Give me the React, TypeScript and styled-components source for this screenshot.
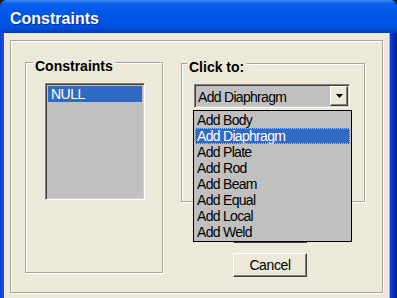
import React from 'react';
import styled, { createGlobalStyle } from 'styled-components';

const GlobalStyle = createGlobalStyle`
    html, body {
        margin: 0;
        padding: 0;
        background: #1c1c14;
    }
    body {
        font-family: 'Liberation Sans', Arial, sans-serif;
    }
`;

const options = [
    'Add Body',
    'Add Diaphragm',
    'Add Plate',
    'Add Rod',
    'Add Beam',
    'Add Equal',
    'Add Local',
    'Add Weld',
];

const App: React.FC = () => {
    const selected = 'Add Diaphragm';
    return (
        <>
            <GlobalStyle />
            <Window>
                <TitleBar>Constraints</TitleBar>
                <Frame>
                    <ClientArea>
                        <OuterPanel>
                            <ConstraintsGroup>
                                <Legend>Constraints</Legend>
                                <ListBox>
                                    <ListItem $active>NULL</ListItem>
                                </ListBox>
                            </ConstraintsGroup>
                            <RightColumn>
                                <ClickGroup>
                                    <Legend $left={5}>Click to:</Legend>
                                    <Combo>
                                        <ComboText>{selected}</ComboText>
                                        <ArrowButton>
                                            <svg width="7" height="4" viewBox="0 0 7 4">
                                                <path d="M0 0h7L3.5 4z" fill="#000" />
                                            </svg>
                                        </ArrowButton>
                                        <DropList>
                                            {options.map((o) => (
                                                <DropItem key={o} $active={o === selected}>
                                                    {o}
                                                </DropItem>
                                            ))}
                                        </DropList>
                                    </Combo>
                                </ClickGroup>
                                <PushButton $top={17}>OK</PushButton>
                                <PushButton $top={10}>Cancel</PushButton>
                            </RightColumn>
                        </OuterPanel>
                    </ClientArea>
                </Frame>
            </Window>
        </>
    );
};

export default App;

const Window = styled.div`
    width: 397px;
    height: 298px;
    display: flex;
    flex-direction: column;
    overflow: hidden;
    border-radius: 7px 7px 0 0;
    background: #0b45dc;
`;

const TitleBar = styled.div`
    height: 33px;
    box-sizing: border-box;
    padding: 10px 0 0 10px;
    background: linear-gradient(
        to bottom,
        #3d8ef8 0%,
        #0a5fec 10%,
        #0057e6 45%,
        #0053df 80%,
        #003cb6 100%
    );
    color: #fff;
    font-weight: 700;
    font-size: 16px;
    line-height: 18px;
    text-shadow: 1px 1px 0 #0b2a8c;
`;

const Frame = styled.div`
    flex: 1;
    display: flex;
    padding: 0 8px 0 4px;
    background: linear-gradient(
        to right,
        #0a3fd4 0,
        #1653e6 4px,
        #0b45dc 388px,
        #0a3cd0 391px,
        #001a8e 397px
    );
`;

const ClientArea = styled.div`
    flex: 1;
    background: #ece9d8;
    padding: 7px 6px 0 6px;
    box-shadow: 1px 0 0 #8fb4ea;
`;

const etched = `
    border: 1px solid #a7a595;
    box-shadow: inset 1px 1px 0 #fff, 1px 1px 0 #fff;
`;

const OuterPanel = styled.div`
    ${etched}
    height: 253px;
    box-sizing: border-box;
    display: flex;
    align-items: flex-start;
    gap: 18px;
    padding: 21px 0 0 14px;
`;

const GroupBox = styled.div`
    ${etched}
    position: relative;
    box-sizing: border-box;
`;

const ConstraintsGroup = styled(GroupBox)`
    width: 138px;
    height: 211px;
    padding: 20px 0 0 19px;
`;

const ClickGroup = styled(GroupBox)`
    width: 184px;
    height: 139px;
    padding: 20px 0 0 12px;
`;

const Legend = styled.span<{ $left?: number }>`
    position: absolute;
    top: -5px;
    left: ${({ $left }) => $left ?? 7}px;
    padding: 0 2px;
    background: #ece9d8;
    font-weight: 700;
    font-size: 14px;
    line-height: 16px;
    color: #000;
`;

const sunken = `
    border-style: solid;
    border-width: 1px;
    border-color: #808080 #fff #fff #808080;
    box-shadow: inset 1px 1px 0 #404040, inset -1px -1px 0 #d4d0c8;
`;

const ListBox = styled.div`
    ${sunken}
    width: 100px;
    height: 117px;
    box-sizing: border-box;
    padding: 2px;
    background: #c0c0c0;
`;

const ListItem = styled.div<{ $active?: boolean }>`
    height: 16px;
    line-height: 16px;
    padding-left: 3px;
    font-size: 14px;
    letter-spacing: -0.5px;
    color: ${({ $active }) => ($active ? '#fff' : '#000')};
    background: ${({ $active }) => ($active ? '#316ac5' : 'transparent')};
`;

const RightColumn = styled.div`
    display: flex;
    flex-direction: column;
    align-items: flex-start;
    margin-top: 1px;
`;

const Combo = styled.div`
    ${sunken}
    position: relative;
    width: 156px;
    height: 24px;
    box-sizing: border-box;
    padding: 1px 1px 1px 3px;
    display: flex;
    align-items: center;
    background: #c0c0c0;
`;

const ComboText = styled.span`
    flex: 1;
    padding-top: 2px;
    font-size: 14px;
    letter-spacing: -0.7px;
    color: #000;
`;

const raised = `
    border-style: solid;
    border-width: 1px;
    border-color: #fff #404040 #404040 #fff;
    box-shadow: inset -1px -1px 0 #808080;
    background: #ece9d8;
`;

const ArrowButton = styled.div`
    ${raised}
    width: 18px;
    height: 20px;
    box-sizing: border-box;
    display: flex;
    align-items: center;
    justify-content: center;
`;

const DropList = styled.div`
    position: absolute;
    top: 25px;
    left: -2px;
    width: 159px;
    box-sizing: border-box;
    border: 1px solid #000;
    padding: 1px;
    background: #c0c0c0;
    z-index: 2;
`;

const DropItem = styled.div<{ $active?: boolean }>`
    height: 16px;
    line-height: 16px;
    box-sizing: border-box;
    padding-left: 2px;
    font-size: 14px;
    letter-spacing: -0.7px;
    color: ${({ $active }) => ($active ? '#fff' : '#000')};
    background: ${({ $active }) => ($active ? '#316ac5' : 'transparent')};
    outline: ${({ $active }) => ($active ? '1px dotted #b9c9a0' : 'none')};
    outline-offset: -1px;
`;

const PushButton = styled.div<{ $top: number }>`
    ${raised}
    margin: ${({ $top }) => $top}px 0 0 52px;
    width: 74px;
    height: 24px;
    box-sizing: border-box;
    display: flex;
    align-items: center;
    justify-content: center;
    font-size: 14px;
    letter-spacing: -0.4px;
    color: #000;
`;
